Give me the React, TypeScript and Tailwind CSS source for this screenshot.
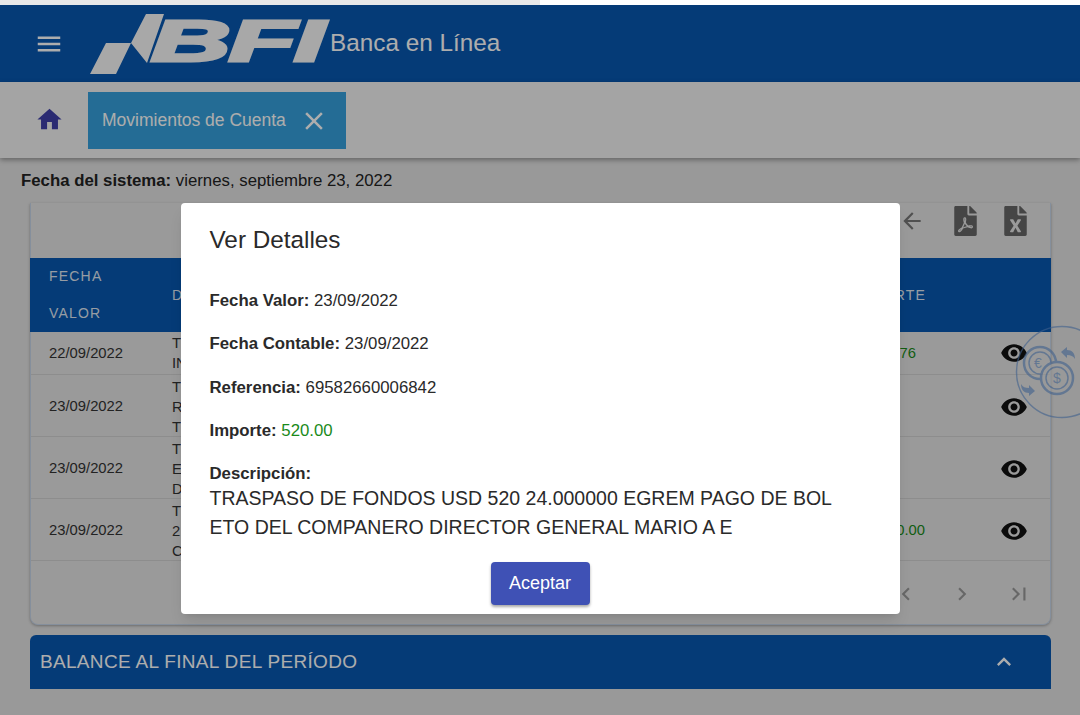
import React from 'react';
import {
  MdMenu,
  MdHome,
  MdClose,
  MdArrowBack,
  MdVisibility,
  MdChevronLeft,
  MdChevronRight,
  MdLastPage,
  MdKeyboardArrowUp,
} from 'react-icons/md';
import { FaFilePdf, FaFileExcel } from 'react-icons/fa';

const rows = [
  { date: '22/09/2022', desc: ['T', 'IN'], amount: '76', height: 'h-[43px]', amountPad: 'pr-[9px]' },
  { date: '23/09/2022', desc: ['T', 'R', 'T'], amount: '', height: 'h-[62px] pt-[2px]', amountPad: '' },
  { date: '23/09/2022', desc: ['T', 'E', 'D'], amount: '', height: 'h-[62px] pt-[2px]', amountPad: '' },
  { date: '23/09/2022', desc: ['T', '2', 'C'], amount: '520.00', height: 'h-[62px] pt-[2px]', amountPad: '' },
];

const BfiLogo = () => (
  <div className="flex items-center h-[60px] w-[240px] text-[#f8f8f8]">
    <svg width="75" height="60" viewBox="0 0 75 60" className="shrink-0">
      <polygon points="0,60 16,29 41,29 56,0 74,0 57,49 41,29 26,60" fill="currentColor" />
    </svg>
    <span className="inline-block origin-left scale-x-[1.9] italic font-bold text-[58px] leading-none tracking-[-1px] -ml-[14px] -mt-[6px] [font-family:'Liberation_Sans',sans-serif] [-webkit-text-stroke:3px_#f8f8f8]">
      BFI
    </span>
  </div>
);

const CurrencyBadge = () => (
  <svg width="66" height="94" viewBox="0 0 66 94" className="absolute left-[1014px] top-[325px] opacity-60" fill="none" stroke="#5f8fd0">
    <circle cx="48" cy="47" r="45.5" strokeWidth="1.5" />
    <circle cx="26" cy="38" r="16" strokeWidth="2.5" />
    <circle cx="26" cy="38" r="11" strokeWidth="1.5" />
    <circle cx="43" cy="53" r="16" strokeWidth="2.5" fill="#e2e2e2" />
    <circle cx="43" cy="53" r="11" strokeWidth="1.5" />
    <text x="24" y="43" textAnchor="middle" fontSize="14" fill="#5f8fd0" stroke="none">€</text>
    <text x="43" y="58" textAnchor="middle" fontSize="14" fill="#5f8fd0" stroke="none">$</text>
    <path d="M47 27 l6 -5 v3 c5 0 8 3 8 9 c-2 -3 -4 -4 -8 -4 v3 z" fill="#5f8fd0" stroke="none" />
    <path d="M21 66 l-6 5 v-3 c-5 0 -8 -3 -8 -9 c2 3 4 4 8 4 v-3 z" fill="#5f8fd0" stroke="none" />
  </svg>
);

const DetailLine = ({ label, value, valueClass }: { label: string; value: string; valueClass?: string }) => (
  <p className="text-[16.8px] leading-[20px] text-[#2a2a2a]">
    <span className="font-bold">{label}</span> <span className={valueClass}>{value}</span>
  </p>
);

export default function App() {
  return (
    <div className="relative h-[715px] w-[1080px] overflow-hidden bg-[#e2e2e2] font-['Liberation_Sans',sans-serif]">
      <div className="flex h-[5px]">
        <div className="w-[540px] bg-[#e8e8e8]" />
        <div className="flex-1 bg-white" />
      </div>

      <header className="flex items-center h-[77px] bg-[#0857b0] pl-[34px]">
        <MdMenu className="h-[30px] w-[30px] text-white shrink-0 mr-[26px]" />
        <BfiLogo />
        <span className="text-[24.3px] text-white">Banca en Línea</span>
      </header>

      <nav className="flex h-[76px] bg-[#f2f2f2] pl-[35px] pt-[10px] shadow-[0_2px_5px_rgba(0,0,0,0.35)] relative">
        <MdHome className="h-[29px] w-[29px] mt-[13px] text-[#3f3fa8] shrink-0" />
        <div className="flex items-center h-[57px] w-[258px] ml-[24px] pl-[14px] bg-[#36a0dc] text-white">
          <span className="text-[17.5px] w-[197px] whitespace-nowrap">Movimientos de Cuenta</span>
          <MdClose className="h-[30px] w-[30px] shrink-0" />
        </div>
      </nav>

      <main className="px-[30px]">
        <p className="-ml-[9px] mt-[13px] text-[16.8px] leading-[20px] text-[#222]">
          <span className="font-bold">Fecha del sistema:</span> viernes, septiembre 23, 2022
        </p>

        <section className="mt-[12px] h-[422px] w-[1021px] rounded-b-lg bg-[#e4e4e4] border-x border-b border-[#c5d3e6] shadow-[0_1px_3px_rgba(0,0,0,0.3)]">
          <div className="flex items-center justify-end h-[55px] text-[#666] pr-[23px] pb-[20px]">
            <MdArrowBack className="h-[26px] w-[26px] text-[#777] mr-[29px]" />
            <FaFilePdf className="h-[30px] w-[23px] mr-[27px]" />
            <FaFileExcel className="h-[30px] w-[23px]" />
          </div>

          <div className="-mx-px flex items-center h-[74px] bg-[#0857b0] text-[14px] tracking-[1.2px] text-[#dfe6f0]">
            <div className="w-[142px] pl-[19px] leading-[37px]">
              FECHA
              <br />
              VALOR
            </div>
            <div className="flex-1">D</div>
            <div className="w-[200px] text-right pr-[125px]">IMPORTE</div>
          </div>

          {rows.map((row, i) => (
            <div key={i} className={`flex items-center ${row.height} border-b border-[#d0d0d0] text-[14.8px] text-[#333]`}>
              <div className="w-[141px] pl-[18px]">{row.date}</div>
              <div className="flex-1 leading-[20px]">
                {row.desc.map((line, j) => (
                  <div key={j}>{line}</div>
                ))}
              </div>
              <div className={`w-[93px] text-right text-[#1a8a1a] ${row.amountPad}`}>{row.amount}</div>
              <div className="w-[125px] flex justify-end pr-[22px]">
                <MdVisibility className="h-[28px] w-[28px] text-[#111]" />
              </div>
            </div>
          ))}

          <div className="flex items-center justify-end h-[62px] text-[#999] pr-[18px] pt-[4px]">
            <MdChevronLeft className="h-[26px] w-[26px] mr-[30px]" />
            <MdChevronRight className="h-[26px] w-[26px] mr-[31px]" />
            <MdLastPage className="h-[26px] w-[26px]" />
          </div>
        </section>

        <section className="flex items-center justify-between mt-[10px] h-[54px] w-[1021px] rounded-t-md bg-[#0857b0] pl-[10px] pr-[33px] text-white">
          <span className="text-[19px] tracking-[0.32px]">BALANCE AL FINAL DEL PERÍODO</span>
          <MdKeyboardArrowUp className="h-[28px] w-[28px]" />
        </section>
      </main>

      <CurrencyBadge />

      <div className="absolute inset-x-0 bottom-0 top-[5px] bg-black/[0.32] flex justify-center pt-[198px]">
        <div className="h-[411px] w-[719px] rounded bg-white pl-[29px] shadow-lg">
          <h2 className="pt-[22px] text-[24.3px] leading-[30px] text-[#2a2a2a]">Ver Detalles</h2>
          <div className="mt-[36px] flex flex-col gap-[23.3px]">
            <DetailLine label="Fecha Valor:" value="23/09/2022" />
            <DetailLine label="Fecha Contable:" value="23/09/2022" />
            <DetailLine label="Referencia:" value="69582660006842" />
            <DetailLine label="Importe:" value="520.00" valueClass="text-[#1a8a1a]" />
            <div>
              <p className="text-[16.8px] leading-[20px] font-bold text-[#2a2a2a]">Descripción:</p>
              <p className="w-[630px] text-[19.5px] leading-[29px] text-[#2a2a2a] break-all">
                TRASPASO DE FONDOS USD 520 24.000000 EGREM PAGO DE BOLETO DEL COMPANERO DIRECTOR GENERAL MARIO A E
              </p>
            </div>
          </div>
          <div className="mt-[20px] flex justify-center pr-[29px]">
            <button className="h-[43px] w-[99px] rounded bg-[#3f51b5] text-[18px] font-medium text-white shadow-[0_2px_3px_rgba(0,0,0,0.35)]">
              Aceptar
            </button>
          </div>
        </div>
      </div>
    </div>
  );
}
